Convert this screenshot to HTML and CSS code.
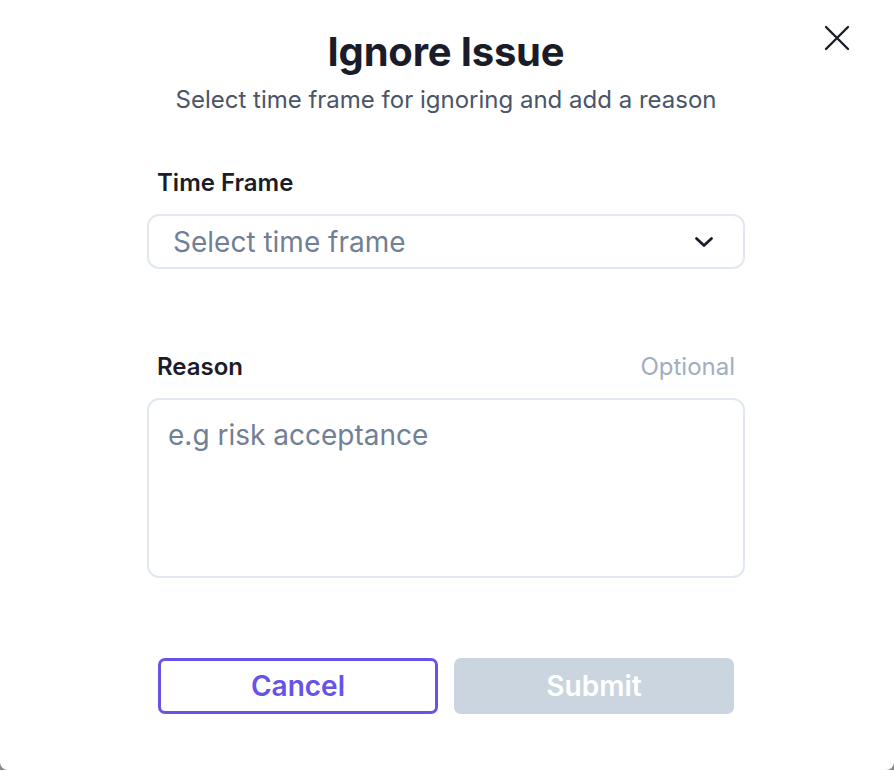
FILE: index.html
```html
<!DOCTYPE html>
<html>
<head>
<meta charset="utf-8">
<link rel="stylesheet" href="styles.css">
</head>
<body>
<div class="modal">
  <button class="close" aria-label="Close">
    <svg width="28" height="28" viewBox="0 0 28 28"><path d="M3 3L25 25M25 3L3 25" stroke="#1a1d29" stroke-width="2.4" stroke-linecap="round"/></svg>
  </button>
  <h1 class="title">Ignore Issue</h1>
  <p class="subtitle">Select time frame for ignoring and add a reason</p>
  <div class="form">
    <div class="field">
      <div class="label-row"><span class="label">Time Frame</span></div>
      <div class="select">
        <span class="placeholder">Select time frame</span>
        <svg width="20" height="12" viewBox="0 0 20 12"><path d="M2.5 2.5L10 9.5L17.5 2.5" fill="none" stroke="#1a1d29" stroke-width="2.8" stroke-linecap="round" stroke-linejoin="round"/></svg>
      </div>
    </div>
    <div class="field reason">
      <div class="label-row"><span class="label">Reason</span><span class="optional">Optional</span></div>
      <div class="textarea"><span class="placeholder">e.g risk acceptance</span></div>
    </div>
    <div class="actions">
      <button class="btn cancel">Cancel</button>
      <button class="btn submit">Submit</button>
    </div>
  </div>
</div>
</body>
</html>
```
FILE: styles.css
```css
html, body { margin: 0; padding: 0; }
body {
  background: #8a8a8a;
  font-family: Inter, "Noto Sans", sans-serif;
}
.modal {
  position: relative;
  width: 894px;
  height: 770px;
  background: #ffffff;
  border-radius: 0 0 8px 8px;
  box-sizing: border-box;
  padding-top: 28px;
  display: flex;
  flex-direction: column;
  align-items: center;
}
.close {
  position: absolute;
  top: 24px;
  right: 43px;
  width: 28px;
  height: 28px;
  padding: 0;
  border: 0;
  background: none;
  display: flex;
}
.title {
  margin: 0;
  font-size: 40px;
  line-height: 48px;
  font-weight: 700;
  color: #1a1d29;
  letter-spacing: -0.2px;
  transform: translateX(-1px);
}
.subtitle {
  margin: 0;
  margin-top: 10px;
  font-size: 24px;
  line-height: 28px;
  color: #4a5568;
  font-weight: 400;
  transform: translateX(-1px);
}
.form {
  width: 598px;
  margin-top: 53px;
  display: flex;
  flex-direction: column;
  transform: translateX(-1px);
}
.label-row {
  display: flex;
  justify-content: space-between;
  align-items: center;
  padding: 0 10px;
  height: 30px;
}
.label {
  font-size: 24px;
  font-weight: 600;
  color: #1a1d29;
}
.optional {
  font-size: 24px;
  color: #a0aec0;
}
.select {
  margin-top: 17px;
  height: 55px;
  box-sizing: border-box;
  border: 2px solid #e2e8f0;
  border-radius: 12px;
  display: flex;
  align-items: center;
  justify-content: space-between;
  padding: 0 29px 0 24px;
}
.placeholder {
  font-size: 28px;
  color: #718096;
}
.reason { margin-top: 82px; }
.textarea {
  margin-top: 17px;
  height: 180px;
  box-sizing: border-box;
  border: 2px solid #e2e8f0;
  border-radius: 12px;
  padding: 18px 19px;
}
.textarea .placeholder { line-height: 34px; }
.actions {
  margin-top: 80px;
  padding: 0 11px;
  display: flex;
  gap: 16px;
}
.btn {
  flex: none;
  width: 280px;
  height: 56px;
  margin: 0;
  border-radius: 7px;
  font-family: Inter, "Noto Sans", sans-serif;
  font-size: 28px;
  font-weight: 600;
  box-sizing: border-box;
  cursor: pointer;
}
.cancel {
  background: #ffffff;
  border: 3px solid #6653e8;
  color: #6653e8;
}
.submit {
  background: #cbd5e0;
  border: 0;
  color: #ffffff;
}
```
